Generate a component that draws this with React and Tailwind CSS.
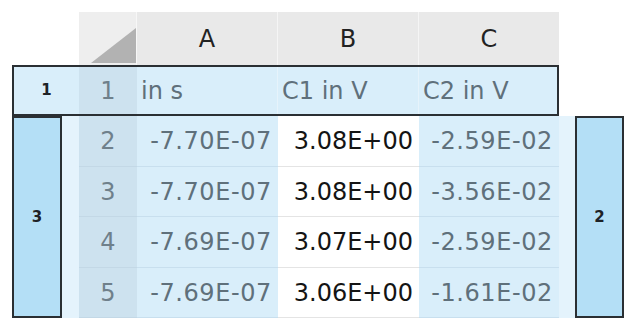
import React from 'react';

const rows = [
  { n: 2, a: '-7.70E-07', b: '3.08E+00', c: '-2.59E-02', h: 'h-[51px]' },
  { n: 3, a: '-7.70E-07', b: '3.08E+00', c: '-3.56E-02', h: 'h-[50px]' },
  { n: 4, a: '-7.69E-07', b: '3.07E+00', c: '-2.59E-02', h: 'h-[51px]' },
  { n: 5, a: '-7.69E-07', b: '3.06E+00', c: '-1.61E-02', h: 'h-[50px]' },
];

function Badge({ label, className }) {
  return (
    <div className={`flex items-center justify-center border-2 border-[#2a2f33] bg-[#b4dff6] font-['DejaVu_Sans',sans-serif] text-[15px] font-bold text-[#1d2226] ${className}`}>
      {label}
    </div>
  );
}

export default function App() {
  return (
    <div className="w-[637px] h-[330px] bg-white pt-3 font-['DejaVu_Sans',sans-serif] text-[24px] leading-none overflow-hidden">
      {/* column headers */}
      <div className="ml-[79px] flex h-[53px]">
        <div className="w-[58px] bg-[#eeeeee] border-r border-[#f7f7f7]">
          <svg width="58" height="53" viewBox="0 0 58 53">
            <polygon points="12,51 57,16 57,51" fill="#b2b2b2" />
          </svg>
        </div>
        {['A', 'B', 'C'].map((l, i) => (
          <div key={l} className={`${i === 2 ? 'w-[140px]' : 'w-[141px] border-r border-[#f5f5f5]'} flex items-center justify-center bg-[#e9e9e9] text-[#222]`}>
            {l}
          </div>
        ))}
      </div>

      {/* row 1 */}
      <div className="ml-3 w-[547px] h-[51px] border-2 border-[#2a2f33] bg-[#d9eefa] flex">
        <div className="w-[65px] flex items-center justify-center text-[15px] font-bold text-[#1d2226]">1</div>
        <div className="w-[58px] flex items-center justify-center bg-[#cde2ef] text-[#6f808b]">1</div>
        <div className="w-[141px] flex items-center pl-1 border-r border-[#e6f3fb] text-[#5f707b]">in s</div>
        <div className="w-[141px] flex items-center pl-1 border-r border-[#e6f3fb] text-[#5f707b]">C1 in V</div>
        <div className="w-[138px] flex items-center pl-1 text-[#5f707b]">C2 in V</div>
      </div>

      {/* data rows */}
      <div className="flex">
        <Badge label="3" className="ml-3 w-[50px] h-[202px]" />
        <div className="w-[17px] h-[202px] bg-[#e4f3fc]" />
        <div className="flex flex-col">
          {rows.map((r) => (
            <div key={r.n} className={`flex ${r.h}`}>
              <div className="w-[58px] flex items-center justify-center bg-[#cde2ef] border-b border-[#c3d8e6] text-[#6f808b]">{r.n}</div>
              <div className="w-[141px] flex items-center justify-end pr-[6px] bg-[#d9eefa] border-b border-[#c8dfee] text-[#5f707b] tracking-[0.6px]">{r.a}</div>
              <div className="w-[141px] flex items-center justify-end pr-[6px] bg-white border-b border-[#e4e4e4] text-[#141414]">{r.b}</div>
              <div className="w-[140px] flex items-center justify-end pr-[6px] bg-[#d9eefa] border-b border-[#c8dfee] text-[#5f707b] tracking-[0.6px]">{r.c}</div>
            </div>
          ))}
        </div>
        <div className="w-4 h-[202px] bg-[#e4f3fc]" />
        <Badge label="2" className="w-[49px] h-[202px]" />
      </div>
    </div>
  );
}
